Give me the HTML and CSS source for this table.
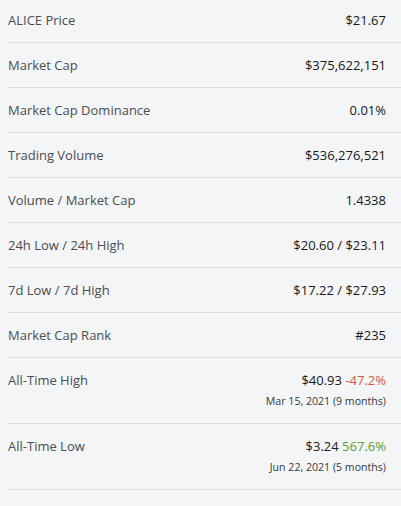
FILE: index.html
```html
<!DOCTYPE html>
<html>
<head>
<meta charset="utf-8">
<link rel="stylesheet" href="styles.css">
</head>
<body>
<div class="stats">
  <div class="row"><span class="label">ALICE Price</span><span class="value">$21.67</span></div>
  <div class="row"><span class="label">Market Cap</span><span class="value">$375,622,151</span></div>
  <div class="row"><span class="label">Market Cap Dominance</span><span class="value">0.01%</span></div>
  <div class="row"><span class="label">Trading Volume</span><span class="value">$536,276,521</span></div>
  <div class="row"><span class="label">Volume / Market Cap</span><span class="value">1.4338</span></div>
  <div class="row"><span class="label">24h Low / 24h High</span><span class="value">$20.60 / $23.11</span></div>
  <div class="row"><span class="label">7d Low / 7d High</span><span class="value">$17.22 / $27.93</span></div>
  <div class="row"><span class="label">Market Cap Rank</span><span class="value">#235</span></div>
  <div class="row"><span class="label">All-Time High</span><div class="value-col"><span class="value">$40.93 <span class="down">-47.2%</span></span><span class="date">Mar 15, 2021 (9 months)</span></div></div>
  <div class="row"><span class="label">All-Time Low</span><div class="value-col"><span class="value">$3.24 <span class="up">567.6%</span></span><span class="date">Jun 22, 2021 (5 months)</span></div></div>
</div>
</body>
</html>
```
FILE: styles.css
```css
html, body {
  margin: 0;
  padding: 0;
  background: #f4f5f7;
}
body {
  font-family: "Open Sans", "Noto Sans", sans-serif;
  font-size: 13px;
}
.stats {
  margin-top: -2px;
  padding-left: 8px;
}
.row {
  display: flex;
  justify-content: space-between;
  align-items: flex-start;
  padding: 12px 15px 11px 0;
  border-bottom: 1px solid #dcdee2;
  line-height: 21px;
}
.row:has(.value-col) {
  padding-bottom: 12px;
}
.label {
  color: #4a4d52;
}
.value {
  color: #16181b;
}
.value-col {
  display: flex;
  flex-direction: column;
  align-items: flex-end;
}
.date {
  font-size: 10.6px;
  line-height: 20px;
  color: #36383c;
}
.down { color: #cf5a48; }
.up { color: #5a9e35; }
```
